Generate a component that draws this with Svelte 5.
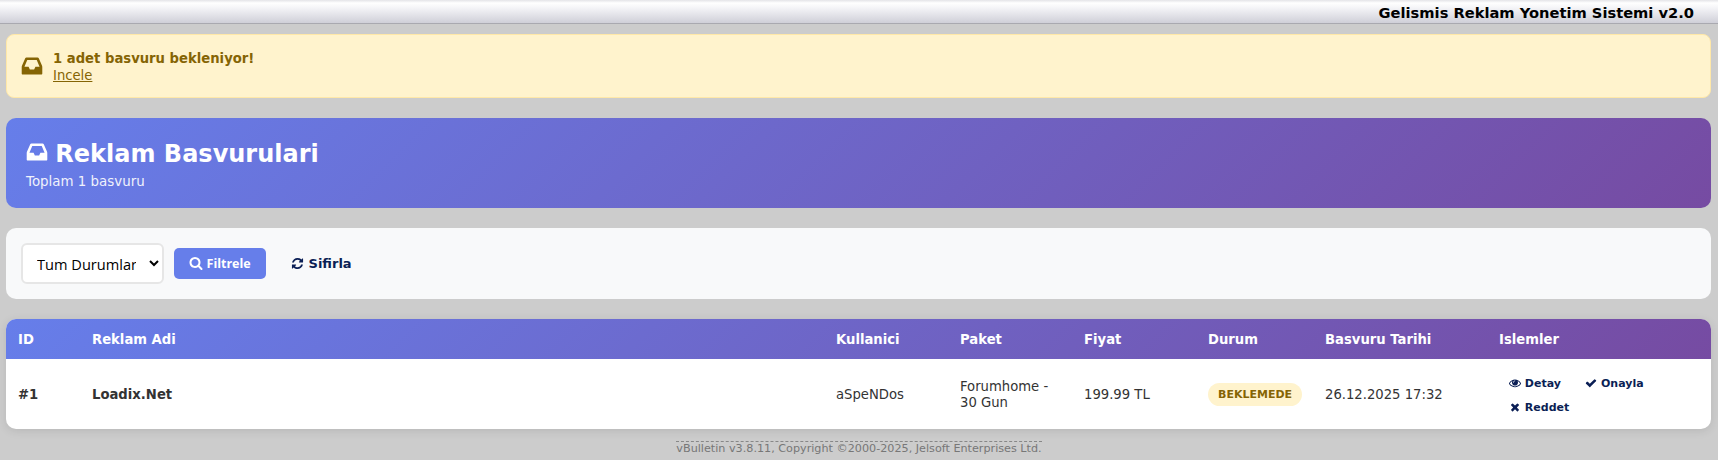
<script>
  const icons = {
    inbox: 'M1151 960h316q-1-3-2.500-8.500t-2.500-7.500l-212-496h-708l-212 496q-1 2-2.500 7.500t-2.500 8.500h316l95 192h320zm513 30v482q0 26-19 45t-45 19h-1408q-26 0-45-19t-19-45v-482q0-62 25-123l238-552q10-25 36.500-42t52.500-17h832q26 0 52.500 17t36.500 42l238 552q25 61 25 123z',
    search: 'M1216 832q0-185-131.500-316.500t-316.500-131.500-316.500 131.500-131.500 316.500 131.500 316.500 316.500 131.500 316.500-131.500 131.500-316.500zm512 832q0 52-38 90t-90 38q-54 0-90-38l-343-342q-179 124-399 124-143 0-273.500-55.500t-225-150-150-225-55.500-273.500 55.500-273.500 150-225 225-150 273.500-55.500 273.500 55.500 225 150 150 225 55.500 273.500q0 220-124 399l343 343q37 37 37 90z',
    refresh: 'M1639 1056q0 5-1 7-64 268-268 434.500t-478 166.500q-146 0-282.500-55t-243.500-157l-129 129q-19 19-45 19t-45-19-19-45v-448q0-26 19-45t45-19h448q26 0 45 19t19 45-19 45l-137 137q71 66 161 102t187 36q134 0 250-65t186-179q11-17 53-117 8-23 30-23h192q13 0 22.500 9.500t9.500 22.500zm25-800v448q0 26-19 45t-45 19h-448q-26 0-45-19t-19-45 19-45l138-138q-148-137-349-137-134 0-250 65t-186 179q-11 17-53 117-8 23-30 23h-199q-13 0-22.500-9.500t-9.500-22.500v-7q65-268 270-434.500t480-166.500q146 0 284 55.500t245 156.500l130-129q19-19 45-19t45 19 19 45z',
    eye: 'M1664 960q-152-236-381-353 61 104 61 225 0 185-131.500 316.500t-316.500 131.500-316.500-131.500-131.500-316.500q0-121 61-225-229 117-381 353 133 205 333.500 326.500t434.500 121.500 434.500-121.500 333.500-326.500zm-720-384q0-20-14-34t-34-14q-125 0-214.500 89.500t-89.500 214.500q0 20 14 34t34 14 34-14 14-34q0-86 61-147t147-61q20 0 34-14t14-34zm848 384q0 34-20 69-140 230-376.500 368.500t-499.500 138.500-499.500-139-376.500-368q-20-35-20-69t20-69q140-229 376.500-368t499.500-139 499.500 139 376.500 368q20 35 20 69z',
    check: 'M1671 566q0 40-28 68l-724 724-136 136q-28 28-68 28t-68-28l-136-136-362-362q-28-28-28-68t28-68l136-136q28-28 68-28t68 28l294 295 656-657q28-28 68-28t68 28l136 136q28 28 28 68z',
    times: 'M1490 1322q0 40-28 68l-136 136q-28 28-68 28t-68-28l-294-294-294 294q-28 28-68 28t-68-28l-136-136q-28-28-28-68t28-68l294-294-294-294q-28-28-28-68t28-68l136-136q28-28 68-28t68 28l294 294 294-294q28-28 68-28t68 28l136 136q28 28 28 68t-28 68l-294 294 294 294q28 28 28 68z'
  };
  const basliklar = ['ID', 'Reklam Adi', 'Kullanici', 'Paket', 'Fiyat', 'Durum', 'Basvuru Tarihi', 'Islemler'];
</script>

{#snippet fa(name, size)}
  <svg class="fa" width={size} height={size} viewBox="0 0 1792 1792" fill="currentColor"><path d={icons[name]}></path></svg>
{/snippet}

<div class="topbar"><span>Gelismis Reklam Yonetim Sistemi v2.0</span></div>

<div class="page">
  <div class="alert">
    <span class="alert-icon">{@render fa('inbox', 24)}</span>
    <div class="alert-text">
      <strong>1 adet basvuru bekleniyor!</strong><br />
      <a href="#incele">Incele</a>
    </div>
  </div>

  <div class="hero">
    <h1>{@render fa('inbox', 24)} Reklam Basvurulari</h1>
    <p>Toplam 1 basvuru</p>
  </div>

  <div class="filters">
    <select>
      <option>Tum Durumlar</option>
    </select>
    <button>{@render fa('search', 14)} Filtrele</button>
    <a class="reset" href="#sifirla">{@render fa('refresh', 13)} Sifirla</a>
  </div>

  <div class="table-card">
    <table>
      <colgroup>
        <col style="width:74px" /><col style="width:744px" /><col style="width:124px" /><col style="width:124px" />
        <col style="width:124px" /><col style="width:117px" /><col style="width:174px" /><col />
      </colgroup>
      <thead>
        <tr>
          {#each basliklar as b}
            <th>{b}</th>
          {/each}
        </tr>
      </thead>
      <tbody>
        <tr>
          <td><b>#1</b></td>
          <td><b>Loadix.Net</b></td>
          <td>aSpeNDos</td>
          <td>Forumhome - 30 Gun</td>
          <td>199.99 TL</td>
          <td><span class="badge">BEKLEMEDE</span></td>
          <td>26.12.2025 17:32</td>
          <td class="actions">
            <a href="#detay">{@render fa('eye', 12)} Detay</a>
            <a href="#onayla">{@render fa('check', 12)} Onayla</a>
            <a href="#reddet">{@render fa('times', 12)} Reddet</a>
          </td>
        </tr>
      </tbody>
    </table>
  </div>
</div>

<div class="copyright"><span>vBulletin v3.8.11, Copyright ©2000-2025, Jelsoft Enterprises Ltd.</span></div>

<style>
  :global(body) {
    margin: 0;
    min-height: 460px;
    background: #cccccc;
    font-family: "DejaVu Sans", Verdana, sans-serif;
    font-size: 13.2px;
    color: #333;
  }
  .fa { vertical-align: -2px; }
  .topbar {
    box-sizing: border-box;
    height: 24px;
    padding: 1px 24px 0 0;
    text-align: right;
    font-size: 14.67px;
    font-weight: bold;
    line-height: 23px;
    color: #000;
    border-bottom: 1px solid #a9a9b0;
    background: linear-gradient(#e4e4e8 0, #fff 3px, #f4f4f7 8px, #cfcfd8 100%);
  }
  .page { padding: 10px 7px 0 6px; }
  .alert {
    box-sizing: border-box;
    height: 64px;
    display: flex;
    align-items: center;
    gap: 9px;
    padding: 0 13px;
    margin-bottom: 20px;
    background: #fff3cd;
    border: 1px solid #ffe8a8;
    border-radius: 8px;
    color: #856404;
    line-height: 17px;
  }
  .alert-text { padding-top: 2px; }
  .alert-icon { display: flex; }
  .alert a { color: #856404; }
  .hero {
    box-sizing: border-box;
    height: 90px;
    padding: 21px 20px 0;
    margin-bottom: 20px;
    color: #fff;
    border-radius: 10px;
    background: linear-gradient(135deg, #667eea 0%, #764ba2 100%);
  }
  .hero h1 { margin: 0; font-size: 24px; line-height: 30px; }
  .hero h1 .fa { margin: 0 -2px 0 -1px; }
  .hero p { margin: 5px 0 0; font-size: 13.4px; line-height: 16px; opacity: 0.9; }
  .filters {
    box-sizing: border-box;
    height: 71px;
    display: flex;
    align-items: center;
    gap: 10px;
    padding: 0 15px;
    margin-bottom: 20px;
    background: #f8f9fa;
    border-radius: 10px;
  }
  select {
    height: 41px;
    width: 143px;
    padding: 0 10px;
    background: #fff;
    color: #000;
    border: 2px solid #e6e6e6;
    border-radius: 6px;
    font-family: "Open Sans", sans-serif;
    font-size: 14.6px;
  }
  button {
    height: 31px;
    width: 92px;
    padding: 0;
    border: 0;
    border-radius: 5px;
    background: #667eea;
    color: #fff;
    font-family: "Open Sans", sans-serif;
    font-size: 12.5px;
    font-weight: 700;
  }
  .reset {
    margin-left: 15px;
    color: #0b1f55;
    font-size: 13px;
    font-weight: bold;
    text-decoration: none;
  }
  .table-card {
    border-radius: 10px;
    overflow: hidden;
    background: #fff;
    box-shadow: 0 2px 10px rgba(0, 0, 0, 0.1);
  }
  table { width: 100%; border-collapse: collapse; table-layout: fixed; font-size: 13.2px; }
  thead tr { background: linear-gradient(135deg, #667eea 0%, #764ba2 100%); }
  th {
    height: 40px;
    padding: 0 12px;
    text-align: left;
    color: #fff;
    font-weight: bold;
  }
  td { height: 70px; padding: 1px 12px 0; line-height: 16px; box-sizing: border-box; }
  .badge {
    display: inline-block;
    padding: 5px 10px;
    border-radius: 12px;
    background: #fff3cd;
    color: #856404;
    font-size: 11px;
    font-weight: bold;
    line-height: 13px;
    white-space: nowrap;
  }
  .actions { line-height: 23px; padding-left: 12px; }
  .actions a {
    display: inline-block;
    margin: 0 10px;
    color: #0b1f55;
    font-size: 11px;
    font-weight: bold;
    text-decoration: none;
    white-space: nowrap;
  }
  .copyright { text-align: center; margin-top: 12px; font-size: 11.2px; color: #777; line-height: 13px; }
  .copyright span { display: inline-block; border-top: 1px dashed #888; }
</style>
